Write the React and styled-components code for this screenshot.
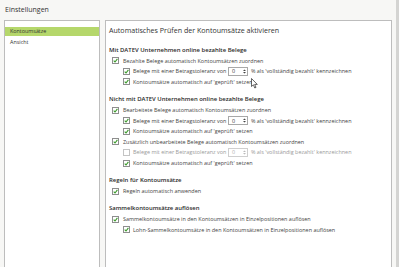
import React from "react";
import styled, { createGlobalStyle } from "styled-components";

const GlobalStyle = createGlobalStyle`
    html, body {
        margin: 0;
        padding: 0;
        background: #f7f7f5;
    }
    body {
        font-family: "Open Sans", "Noto Sans", sans-serif;
        color: #3a3a3a;
    }
`

const Window = styled.div`
    position: relative;
    width: 399px;
    height: 267px;
    overflow: hidden;
    display: flex;
    background: #f7f7f5;
`

const Main = styled.div`
    flex: 1;
    display: flex;
    flex-direction: column;
    min-width: 0;
`

const Header = styled.div`
    height: 20px;
    flex: none;
    padding-left: 5px;
    font-size: 7px;
    line-height: 20px;
    color: #333;
`

const Body = styled.div`
    flex: 1;
    display: flex;
    padding-left: 4px;
    min-height: 0;
`

const Sidebar = styled.div`
    width: 94px;
    flex: none;
    background: #fff;
    border: 1px solid #bdbdbd;
    border-bottom: none;
    padding-top: 5.5px;
`

const NavItem = styled.div`
    height: 9px;
    line-height: 9px;
    margin-bottom: 2px;
    padding-left: 5px;
    font-size: 5.4px;
    color: #333;
    background: ${props => props.active ? '#b5d76b' : 'transparent'};
`

const Content = styled.div`
    width: 282px;
    flex: none;
    margin-left: 5px;
    background: #fff;
    border: 1px solid #bdbdbd;
    border-bottom: none;
    padding: 1px 0 0 3px;
`

const Scroll = styled.div`
    width: 3px;
    flex: none;
    background: #d4d4d2;
`

const Title = styled.div`
    font-size: 7.1px;
    line-height: 16px;
    color: #333;
`

const Section = styled.div`
    margin-top: 6.5px;
`

const Heading = styled.div`
    font-size: 5.95px;
    font-weight: 600;
    line-height: 11px;
    color: #2a2a2a;
`

const Row = styled.div`
    display: flex;
    align-items: center;
    height: 10.6px;
    padding-left: ${props => props.level === 2 ? 14 : 3}px;
    font-size: 5.45px;
    white-space: nowrap;
    color: ${props => props.disabled ? '#9a9a9a' : '#444'};
`

const Box = styled.span`
    width: 5px;
    height: 5px;
    flex: none;
    border: 0.8px solid ${props => props.disabled ? '#c4c4c4' : '#8e8e8e'};
    background: #fff;
    margin-right: ${props => props.level === 2 ? 3 : 4}px;
    display: flex;
    align-items: center;
    justify-content: center;
`

const Spin = styled.span`
    display: inline-flex;
    align-items: center;
    justify-content: space-between;
    width: 14px;
    height: 7px;
    margin: 0 2.5px 0 2px;
    padding: 0 1.5px 0 2.5px;
    border: 0.8px solid ${props => props.disabled ? '#cfcfcf' : '#a8a8a8'};
    background: #fff;
    color: ${props => props.disabled ? '#b0b0b0' : '#333'};
`

const Cursor = styled.svg`
    position: absolute;
    left: 251px;
    top: 78px;
`

const Check = () => (
    <svg width="5" height="5" viewBox="0 0 5 5">
        <path d="M0.7 2.7 L2 4 L4.4 0.8" fill="none" stroke="#3b9a2b" strokeWidth="1.1" />
    </svg>
)

const Arrows = ({ disabled }) => (
    <svg width="3" height="5" viewBox="0 0 3 5">
        <path d="M0 2 L1.5 0.4 L3 2 Z M0 3 L1.5 4.6 L3 3 Z" fill={disabled ? '#bbb' : '#444'} />
    </svg>
)

const CheckRow = ({ level, checked = true, disabled, children }) => (
    <Row level={level} disabled={disabled}>
        <Box level={level} disabled={disabled}>{checked && <Check />}</Box>
        {children}
    </Row>
)

const Tolerance = ({ disabled }) => (
    <CheckRow level={2} checked={!disabled} disabled={disabled}>
        Belege mit einer Betragstoleranz von
        <Spin disabled={disabled}>0 <Arrows disabled={disabled} /></Spin>
        % als 'vollständig bezahlt' kennzeichnen
    </CheckRow>
)

const App = () => {
    return (
        <Window>
            <GlobalStyle />
            <Main>
                <Header>Einstellungen</Header>
                <Body>
                    <Sidebar>
                        <NavItem active>Kontoumsätze</NavItem>
                        <NavItem>Ansicht</NavItem>
                    </Sidebar>
                    <Content>
                        <Title>Automatisches Prüfen der Kontoumsätze aktivieren</Title>

                        <Section>
                            <Heading>Mit DATEV Unternehmen online bezahlte Belege</Heading>
                            <CheckRow>Bezahlte Belege automatisch Kontoumsätzen zuordnen</CheckRow>
                            <Tolerance />
                            <CheckRow level={2}>Kontoumsätze automatisch auf 'geprüft' setzen</CheckRow>
                        </Section>

                        <Section>
                            <Heading>Nicht mit DATEV Unternehmen online bezahlte Belege</Heading>
                            <CheckRow>Bearbeitete Belege automatisch Kontoumsätzen zuordnen</CheckRow>
                            <Tolerance />
                            <CheckRow level={2}>Kontoumsätze automatisch auf 'geprüft' setzen</CheckRow>
                            <CheckRow>Zusätzlich unbearbeitete Belege automatisch Kontoumsätzen zuordnen</CheckRow>
                            <Tolerance disabled />
                            <CheckRow level={2}>Kontoumsätze automatisch auf 'geprüft' setzen</CheckRow>
                        </Section>

                        <Section>
                            <Heading>Regeln für Kontoumsätze</Heading>
                            <CheckRow>Regeln automatisch anwenden</CheckRow>
                        </Section>

                        <Section>
                            <Heading>Sammelkontoumsätze auflösen</Heading>
                            <CheckRow>Sammelkontoumsätze in den Kontoumsätzen in Einzelpositionen auflösen</CheckRow>
                            <CheckRow level={2}>Lohn-Sammelkontoumsätze in den Kontoumsätzen in Einzelpositionen auflösen</CheckRow>
                        </Section>
                    </Content>
                </Body>
            </Main>
            <Scroll />
            <Cursor width="7" height="11" viewBox="0 0 7 11">
                <path d="M0.5 0.5 L0.5 8.5 L2.4 6.8 L3.8 10 L5 9.4 L3.7 6.4 L6.3 6.4 Z" fill="#fff" stroke="#222" strokeWidth="0.7" strokeLinejoin="round" />
            </Cursor>
        </Window>
    )
}

export default App
